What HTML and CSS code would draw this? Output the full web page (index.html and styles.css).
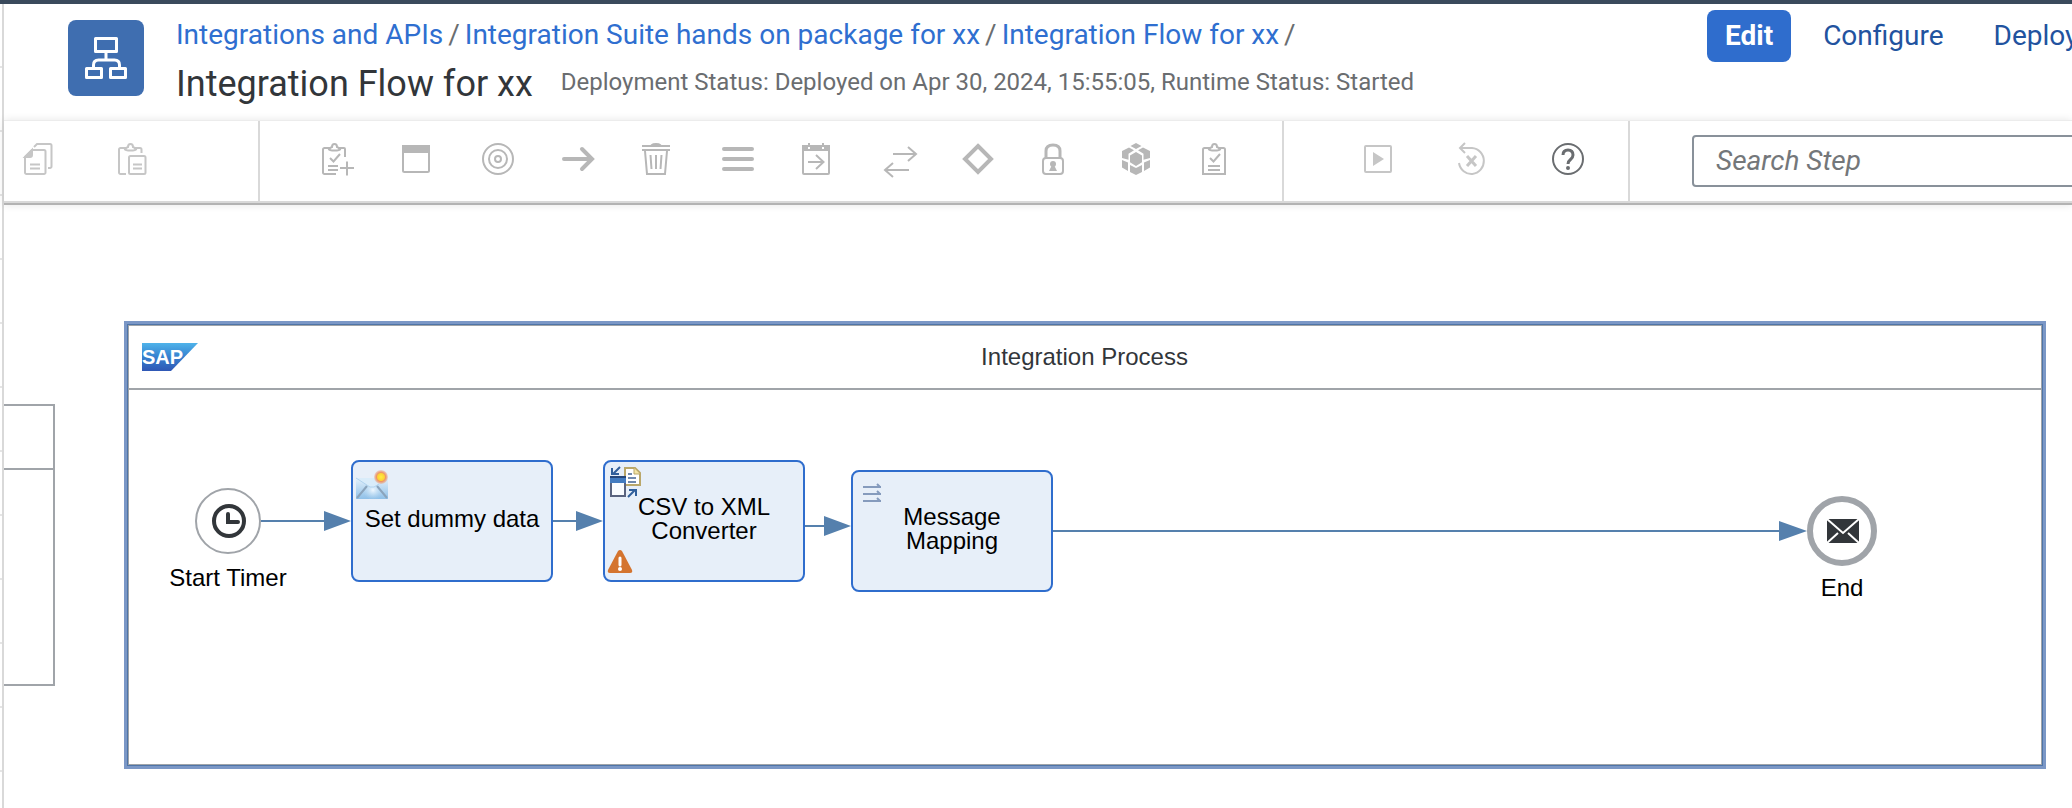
FILE: index.html
```html
<!DOCTYPE html>
<html lang="en">
<head>
<meta charset="utf-8">
<title>Integration Flow for xx</title>
<link rel="stylesheet" href="styles.css">
</head>
<body>
<div class="shell">
  <div class="side-rail"></div>
  <main class="page">
    <header class="header">
      <div class="app-icon">
        <svg width="76" height="76" viewBox="0 0 76 76" fill="none" stroke="#fff" stroke-width="3" stroke-linejoin="round"><rect x="27.500" y="18.500" width="21" height="13"/><path d="M38 32v8M25.500 48v-3q0-5 5-5h16q5 0 5 5v3"/><rect x="18.500" y="48.500" width="15" height="9"/><rect x="42.500" y="48.500" width="15" height="9"/></svg>
      </div>
      <div class="headings">
        <nav class="crumbs" aria-label="Breadcrumb">
          <a href="#">Integrations and APIs</a><span>/</span><a href="#">Integration Suite hands on package for xx</a><span>/</span><a href="#">Integration Flow for xx</a><span>/</span>
        </nav>
        <div class="title-row">
          <h1>Integration Flow for xx</h1>
          <p>Deployment Status: Deployed on Apr 30, 2024, 15:55:05, Runtime Status: Started</p>
        </div>
      </div>
      <div class="actions">
        <button class="btn primary" type="button">Edit</button>
        <button class="btn" type="button">Configure</button>
        <button class="btn" type="button">Deploy</button>
      </div>
    </header>

    <div class="toolbar" role="toolbar" aria-label="Editor tools">
      <div class="group clipboard">
        <button type="button" aria-label="Copy"><svg viewBox="0 0 32 32"><path d="M10 7H20a1.500 1.500 0 0 1 1.500 1.500V29.500a1.500 1.500 0 0 1-1.500 1.500H2.500A1.500 1.500 0 0 1 1 29.500V14L8 7z"/><path class="f" d="M1 14l7-7v5q0 2-2 2z"/><path d="M10 4l3-3H26a1.500 1.500 0 0 1 1.500 1.500V23.500a1.500 1.500 0 0 1-1.500 1.500H24M6 21.500H16M6 25.500H16"/></svg></button>
        <button type="button" aria-label="Paste"><svg viewBox="0 0 32 32"><path d="M8 31H2.500A1.500 1.500 0 0 1 1 29.500V6.500A1.500 1.500 0 0 1 2.500 5H8M16 5h6a1.500 1.500 0 0 1 1.500 1.500V10M7 6.500q1-2 3-2.500 0-3 2.500-3T15 4q2 .5 3 2.500-1 .9-3 .9H10q-2 0-3-.9z"/><rect x="11" y="13" width="16.500" height="18" rx="1.500"/><path d="M15 21.500h9M15 25.500h9"/></svg></button>
      </div>
      <div class="group palette">
        <button type="button" aria-label="Add task"><svg viewBox="0 0 32 32"><path d="M14 31H2.500A1.500 1.500 0 0 1 1 29.500V6.500A1.500 1.500 0 0 1 2.500 5H8M16 5h6a1 1 0 0 1 1 1V14M7 6.500q1-2 3-2.500 0-3 2.500-3T15 4q2 .5 3 2.500-1 .9-3 .9H10q-2 0-3-.9zM8 15l3.500 3.500L18 11M6 23h10M6 27h10M25 18.500v14M18 25h14"/></svg></button>
        <button type="button" aria-label="Participants"><svg viewBox="0 0 32 32"><rect x="1" y="3" width="26" height="26" rx="1.500"/><path class="f" d="M1 3h26v6H1z"/></svg></button>
        <button type="button" aria-label="Events"><svg viewBox="0 0 32 32"><circle cx="16" cy="16" r="15"/><circle cx="16" cy="16" r="9"/><circle cx="16" cy="16" r="3"/></svg></button>
        <button type="button" aria-label="Connector"><svg viewBox="0 0 32 32"><path class="w" d="M2 16h27M20 6l10 10-10 10"/></svg></button>
        <button type="button" aria-label="Delete"><svg viewBox="0 0 32 32"><path d="M0 3h28M0 7h28M3 8l2 23H23l2-23M8.500 12l1 14M14 12v14M19.500 12l-1 14"/><path class="f" d="M10 2q1-1 4-1t4 1z"/></svg></button>
        <button type="button" aria-label="Menu"><svg viewBox="0 0 32 32"><path class="w" d="M2 6h28M2 16h28M2 26h28"/></svg></button>
        <button type="button" aria-label="Call"><svg viewBox="0 0 32 32"><rect x="1" y="3" width="26" height="28" rx="1"/><path class="f" d="M1 3h26v4H1z"/><path d="M7 0v4M21 0v4M6 19h15M14 12l7.500 7-7.500 7"/><path class="hole" d="M7 4v2M21 4v2"/></svg></button>
        <button type="button" aria-label="Routing"><svg viewBox="0 0 32 32"><path d="M11 11H33M26 4l8 7-8 7M27 27H4M11 20l-8 7 8 7"/></svg></button>
        <button type="button" aria-label="Gateway"><svg viewBox="0 0 32 32"><path class="thick" d="M16 3L29 16 16 29 3 16z"/></svg></button>
        <button type="button" aria-label="Security"><svg viewBox="0 0 32 32"><rect x="1" y="15" width="20" height="16" rx="3"/><path class="bold" d="M4 15V8q0-6 7-6t7 6v7"/><circle class="s" cx="11" cy="21" r="3"/><path class="s" d="M10 22h2l3 6H7z"/></svg></button>
        <button type="button" aria-label="Persistence"><svg viewBox="0 0 32 32"><path class="s" d="M14 0l5.500 3L14 6 8.500 3zM14 9l6 3.500v6.800L14 23l-6-3.700v-6.800zM7 4.500l5 2.800-5.500 3.500v6L0 15V8zM21 4.500L28 8v7l-6.500 1.800v-6L16 7.300zM0 17l6 2.500V28l-6-3.500zM28 17l-6 2.500V28l6-3.500zM8 22l6 3 6-3v7l-6 3-6-3z"/></svg></button>
        <button type="button" aria-label="Validators"><svg viewBox="0 0 32 32"><path d="M8 5H2.500A1.500 1.500 0 0 0 1 6.500V31H23V6.500A1.500 1.500 0 0 0 21.500 5H16M7 6.500q1-2 3-2.500 0-3 2.500-3T15 4q2 .5 3 2.500-1 .9-3 .9H10q-2 0-3-.9zM8 15l3.500 3.500L18 11M6 23h12M6 27h12"/></svg></button>
      </div>
      <div class="group run">
        <button type="button" aria-label="Run simulation"><svg viewBox="0 0 32 32"><rect x="1" y="3" width="26" height="26" rx="1"/><path class="s" d="M9 9l11 7-11 7z"/></svg></button>
        <button type="button" aria-label="Reset"><svg viewBox="0 0 32 32"><path d="M7 0L2 5l5 5M2 5h12a12.500 13 0 1 1-13 15"/><path class="bold" d="M9 13l9 10M18 13L9 23"/></svg></button>
        <button class="dark" type="button" aria-label="Help"><svg viewBox="0 0 32 32"><circle cx="16" cy="16" r="15"/><path class="bold" d="M11 12q0-5 5-5t5 5q0 2.500-2.500 4.500T16 21"/><circle class="f" cx="16" cy="25" r="1"/></svg></button>
      </div>
      <div class="search">
        <input type="text" aria-label="Search Step" placeholder="Search Step">
      </div>
    </div>

    <section class="canvas" aria-label="Integration flow diagram">
      <div class="sender"></div>
      <div class="process">
        <div class="process-head">
          <svg width="56" height="28" viewBox="0 0 56 28"><defs><linearGradient id="sap" x1="0" y1="0" x2="0" y2="1"><stop offset="0" stop-color="#4fb3ea"/><stop offset=".5" stop-color="#3580cf"/><stop offset="1" stop-color="#2f57b5"/></linearGradient></defs><path d="M0 0h56L29 28H0z" fill="url(#sap)"/><text class="sap-text" x="0" y="21">SAP</text></svg>
          <h2>Integration Process</h2>
        </div>
      </div>
      <svg class="wires" width="2068" height="600" viewBox="4 205 2068 600">
        <g stroke="#5580ad" stroke-width="2"><path d="M261 521h70M553 521h30M805 526h26M1053 531h740"/></g>
        <g fill="#5580ad"><path d="M324 511l27 10-27 10zM576 511l27 10-27 10zM824 516l27 10-27 10zM1779 521l28 10-28 10z"/></g>
      </svg>
      <div class="event start">
        <svg width="66" height="66" viewBox="0 0 66 66" fill="none"><circle cx="33" cy="33" r="32" fill="#fff" stroke="#a0a4a9" stroke-width="2"/><circle cx="34" cy="33" r="15" stroke="#32363a" stroke-width="4"/><path d="M33 26v8h10" stroke="#32363a" stroke-width="4" stroke-linecap="round"/></svg>
        <span>Start Timer</span>
      </div>
      <div class="node n1">
        <svg class="node-icon envelope" width="32" height="30" viewBox="0 0 32 30"><defs><linearGradient id="env" x1="0" y1="0" x2="0" y2="1"><stop offset="0" stop-color="#e4f1fb"/><stop offset="1" stop-color="#8fc0e8"/></linearGradient><radialGradient id="lit"><stop offset="0" stop-color="#f0f8ff"/><stop offset="1" stop-color="#b5d8f3" stop-opacity="0"/></radialGradient><radialGradient id="sun"><stop offset="0" stop-color="#ffee40"/><stop offset=".5" stop-color="#fcd038"/><stop offset=".65" stop-color="#ed9468"/><stop offset="1" stop-color="#ed9468" stop-opacity=".3"/></radialGradient></defs><path d="M0 8h32v21H0z" fill="url(#env)"/><circle cx="17" cy="20" r="10" fill="url(#lit)"/><path d="M0 8h32L18 17h-4z" fill="#d9ecfa"/><path d="M1 28L11 16M31 28L21 16" stroke="#8ba4bc" stroke-width="2"/><path d="M0 8l14 9h4l5-3" fill="none" stroke="#b1d3ee"/><circle cx="25" cy="7" r="7" fill="url(#sun)"/></svg>
        <span>Set dummy data</span>
      </div>
      <div class="node n2">
        <svg class="node-icon convert" width="32" height="32" viewBox="0 0 32 32"><path d="M16 2h10l5 5v12H16z" fill="#fff" stroke="#baa76a" stroke-width="2"/><path d="M25 2v6h6" fill="#f4e5a5" stroke="#baa76a"/><path d="M19 8h4M19 12h8M19 16h8" stroke="#7189ad" stroke-width="2"/><path d="M2 12h14v18H2z" fill="#f9fcff" stroke="#59637f" stroke-width="2"/><path d="M1 11h16v6H1z" fill="#427bc0"/><path d="M1 11h16" stroke="#26477b" stroke-width="2"/><path d="M11 1L4 8M3 2v6h7M19 31l7-7M20 24h7v6" fill="none" stroke="#315f9b" stroke-width="2"/></svg>
        <span>CSV to XML Converter</span>
        <svg class="warning" width="24" height="24" viewBox="0 0 24 24"><path d="M10 1q2-2 4 0l10 19q1 3-2 3H2q-3 0-2-3z" fill="#d4742f"/><path d="M12 8v7" stroke="#fff" stroke-width="3" stroke-linecap="round"/><circle cx="12" cy="19" r="2" fill="#fff"/></svg>
      </div>
      <div class="node n3">
        <svg class="node-icon map" width="20" height="22" viewBox="0 0 20 22" fill="none" stroke="#859bbd" stroke-width="2"><path d="M1 4h18M1 11h18M1 18h18"/><path d="M15 1l3 3M15 8l3 3M15 15l3 3"/></svg>
        <span>Message Mapping</span>
      </div>
      <div class="event end">
        <svg width="70" height="70" viewBox="0 0 70 70" fill="none"><circle cx="35" cy="35" r="32" fill="#fff" stroke="#a0a4a9" stroke-width="6"/><rect x="20" y="23" width="32" height="24" rx="1" fill="#32363a"/><path d="M20 23l16 14 16-14M20 47l11-10M52 47L41 37" stroke="#fff" stroke-width="2"/></svg>
        <span>End</span>
      </div>
    </section>
  </main>
</div>
</body>
</html>
```
FILE: styles.css
```css
* { box-sizing: border-box; }

body {
  margin: 0;
  background: #fff;
  font-family: Roboto, "Open Sans", sans-serif;
  color: #32363a;
}

button, input { font: inherit; }

.shell {
  display: flex;
  min-height: 100vh;
  border-top: 4px solid #3a4a5c;
  overflow: hidden;
}

.side-rail {
  flex: none;
  width: 4px;
  border-right: 2px solid #d9d9d9;
  background: repeating-linear-gradient(#fff 0 62px, #e5e5e5 62px 64px);
}

.page {
  flex: 1;
  min-width: 0;
  display: flex;
  flex-direction: column;
}

.header {
  display: flex;
  align-items: flex-start;
  height: 116px;
  padding-left: 64px;
}

.app-icon {
  flex: none;
  width: 76px;
  height: 76px;
  margin: 16px 32px 0 0;
  border-radius: 8px;
  background: #3f6eb0;
}

.app-icon svg { display: block; }

.headings {
  flex: 1;
  min-width: 0;
  padding-top: 13px;
  white-space: nowrap;
}

.crumbs {
  display: flex;
  gap: 5px;
  font-size: 28px;
  line-height: 36px;
  color: #6a6d70;
}

.crumbs a {
  color: #2f6fd0;
  text-decoration: none;
}

.title-row {
  display: flex;
  align-items: center;
  gap: 28px;
  margin-top: 7px;
}

h1 {
  margin: 0;
  font-size: 36px;
  font-weight: 400;
  line-height: 48px;
}

.title-row p {
  margin: 0;
  padding-bottom: 4px;
  font-size: 24px;
  color: #6a6d70;
}

.actions {
  flex: none;
  width: 365px;
  display: flex;
  gap: 14px;
  padding-top: 6px;
  overflow: hidden;
}

.btn {
  flex: none;
  height: 52px;
  padding: 0 18px 2px;
  border: 0;
  border-radius: 8px;
  background: none;
  color: #22539f;
  font-size: 28px;
}

.btn.primary {
  background: #2f6dcd;
  color: #fff;
  font-weight: 700;
}

.toolbar {
  display: flex;
  height: 85px;
  border-top: 1px solid #ececec;
  border-bottom: 2px solid #b3b3b3;
  box-shadow: 0 0 8px rgba(0, 0, 0, .1);
}

.group {
  flex: none;
  display: flex;
  align-items: center;
  padding-bottom: 4px;
  border-right: 2px solid #d9d9d9;
  border-bottom: 2px solid #d9d9d9;
}

.group button {
  width: 32px;
  height: 32px;
  padding: 0;
  border: 0;
  background: none;
  color: #b7b7b7;
}

.group svg {
  display: block;
  width: 32px;
  height: 32px;
  overflow: visible;
  fill: none;
  stroke: currentColor;
  stroke-width: 2;
}

.group .f { fill: currentColor; }
.group .s { fill: currentColor; stroke: none; }
.group .w { stroke-width: 4; stroke-linecap: round; }
.group .thick { stroke-width: 4; }
.group .bold { stroke-width: 3; }
.group .hole { stroke: #fff; }

.clipboard { width: 256px; padding-left: 20px; gap: 62px; }
.palette { width: 1024px; padding-left: 62px; gap: 48px; }
.run { width: 346px; padding-left: 80px; gap: 62px; }
.clipboard button, .run button { color: #c6c6c6; }
.run .dark { color: #6a6d70; }

.search {
  flex: 1;
  min-width: 0;
  padding: 14px 0 0 62px;
  border-bottom: 2px solid #d9d9d9;
  overflow: hidden;
}

.search input {
  width: calc(100% + 8px);
  height: 52px;
  padding: 0 22px 2px;
  border: 2px solid #89919a;
  border-radius: 4px;
  color: #32363a;
  font-size: 28px;
}

.search input::placeholder {
  color: #74777a;
  font-style: italic;
  opacity: 1;
}

.canvas {
  position: relative;
  flex: 1;
  min-height: 600px;
  overflow: hidden;
  font-family: "Liberation Sans", Arial, sans-serif;
  font-size: 24px;
  line-height: 24px;
  color: #000;
}

.sender {
  position: absolute;
  left: 0;
  top: 199px;
  width: 51px;
  height: 282px;
  border: 2px solid #a0a4a9;
  border-left: 0;
  background: linear-gradient(#a0a4a9, #a0a4a9) 0 62px / 100% 2px no-repeat;
}

.process {
  position: absolute;
  left: 120px;
  right: 26px;
  top: 116px;
  height: 448px;
  padding: 2px;
  border: 3px solid #7b97c6;
  box-shadow: inset 0 0 0 1px #4f75a8, inset 0 0 0 2px #a0a4a9;
}

.process-head {
  display: flex;
  align-items: center;
  height: 64px;
  padding-left: 13px;
  border-bottom: 2px solid #a0a4a9;
}

.sap-text {
  fill: #fff;
  font-size: 20px;
  font-weight: 700;
}

h2 {
  flex: 1;
  margin: 0;
  padding-right: 70px;
  font-size: 24px;
  font-weight: 400;
  line-height: 28px;
  text-align: center;
  color: #32363a;
}

.wires {
  position: absolute;
  left: 0;
  top: 0;
}

.event {
  position: absolute;
  display: flex;
  flex-direction: column;
  align-items: center;
  width: 140px;
}

.start { left: 154px; top: 283px; gap: 12px; }
.end { left: 1768px; top: 291px; gap: 10px; }

.node {
  position: absolute;
  display: flex;
  align-items: center;
  justify-content: center;
  width: 202px;
  height: 122px;
  padding: 0 24px 4px;
  border: 2px solid #2f6dcd;
  border-radius: 8px;
  background: #e7eff9;
  text-align: center;
}

.n1 { left: 347px; top: 255px; padding: 0 0 4px; }
.n2 { left: 599px; top: 255px; }
.n3 { left: 847px; top: 265px; padding: 0 40px 4px; }

.node-icon, .warning { position: absolute; }
.envelope { left: 3px; top: 8px; }
.convert { left: 4px; top: 4px; }
.map { left: 9px; top: 11px; }
.warning { left: 3px; bottom: 6px; overflow: visible; }
```
